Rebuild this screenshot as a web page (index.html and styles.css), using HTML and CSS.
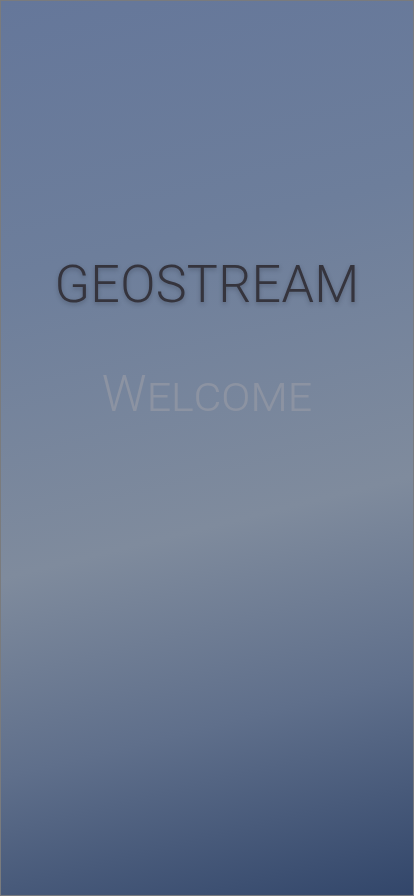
FILE: index.html
```html
<!DOCTYPE html>
<html>
<head>
<meta charset="utf-8">
<link rel="stylesheet" href="styles.css">
</head>
<body>
<main class="screen">
  <h1 class="brand">GEOSTREAM</h1>
  <p class="welcome">Welcome</p>
</main>
</body>
</html>
```
FILE: styles.css
```css
html, body {
  margin: 0;
  padding: 0;
}
.screen {
  box-sizing: border-box;
  width: 414px;
  height: 896px;
  border: 1px solid #7a7b7d;
  background: linear-gradient(166deg, #65779a 0%, #6d7e9b 28%, #7f8b9d 58%, #5f6f8b 78%, #32466a 100%);
  display: flex;
  flex-direction: column;
  align-items: center;
  font-family: Roboto, "Liberation Sans", sans-serif;
}
.brand {
  margin: 254px 0 0 0;
  font-size: 52px;
  font-weight: 300;
  line-height: 60px;
  color: #35343d;
  letter-spacing: 0.3px;
  text-shadow: 0 2px 4px rgba(40, 45, 60, 0.35);
}
.welcome {
  margin: 49px 0 0 0;
  font-size: 50px;
  font-weight: 300;
  line-height: 60px;
  color: #8c93a2;
  font-variant: small-caps;
}
```
